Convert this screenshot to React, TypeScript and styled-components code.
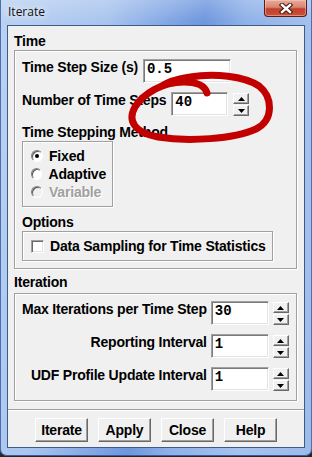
import React from "react";
import styled, { createGlobalStyle } from "styled-components";

const GlobalStyle = createGlobalStyle`
  html, body {
    margin: 0;
    padding: 0;
  }
  body {
    width: 312px;
    height: 457px;
    overflow: hidden;
    background: #24282c;
    font-family: "Liberation Sans", Arial, sans-serif;
  }
`;

const Window = styled.div`
  position: relative;
  box-sizing: border-box;
  width: 312px;
  height: 456px;
  padding: 0 7px 8px;
  display: flex;
  flex-direction: column;
  border-radius: 0 0 7px 7px;
  background: linear-gradient(
      180deg,
      rgba(255, 255, 255, 0.22) 0px,
      rgba(255, 255, 255, 0) 22px
    ),
    linear-gradient(
      100deg,
      #bad2f2 0%,
      #a9c4ee 28%,
      #7ea3e3 46%,
      #6d96dd 53%,
      #8eb0e8 63%,
      #a6c2ee 82%,
      #9cbaeb 100%
    );
  box-shadow: inset 1px 0 0 #4c70ad, inset -1px 0 0 #4c70ad,
    inset 0 -1px 0 #3b5d96;
`;

const TitleBar = styled.div`
  height: 25px;
  display: flex;
  align-items: flex-start;
`;

const Title = styled.div`
  padding: 4px 0 0 1px;
  font-family: "Open Sans", "Noto Sans", sans-serif;
  font-size: 12px;
  line-height: 16px;
  color: #111;
  text-shadow: 0 0 6px rgba(255, 255, 255, 0.95), 0 0 10px rgba(255, 255, 255, 0.7);
`;

const CloseButton = styled.div`
  box-sizing: border-box;
  margin-left: auto;
  margin-right: -2px;
  width: 43px;
  height: 17px;
  display: flex;
  align-items: center;
  justify-content: center;
  border: 1px solid #5b1d16;
  border-top: none;
  border-radius: 0 0 4px 4px;
  background: linear-gradient(
    180deg,
    #e9ab9b 0%,
    #d98572 45%,
    #c2412c 55%,
    #cb5038 100%
  );
  box-shadow: inset 0 0 0 1px rgba(255, 215, 205, 0.45);
`;

const Client = styled.div`
  flex: 1;
  display: flex;
  flex-direction: column;
  background: #f0f0f0;
  border: 1px solid #3d5a88;
  font-size: 14px;
  letter-spacing: -0.2px;
  font-weight: 700;
  color: #000;
`;

const Body = styled.div`
  padding: 7px 7px 8px 6px;
  display: flex;
  flex-direction: column;
`;

const SectionLabel = styled.div<{ $top?: number; $bottom?: number }>`
  line-height: 16px;
  margin-top: ${(p) => p.$top ?? 0}px;
  margin-bottom: ${(p) => p.$bottom ?? 1}px;
`;

const Frame = styled.div<{ $pad: string }>`
  border: 1px solid #a0a0a0;
  box-shadow: inset 1px 1px 0 #fff, 1px 1px 0 #fff;
  padding: ${(p) => p.$pad};
  display: flex;
  flex-direction: column;
  align-items: flex-start;
`;

const FieldRow = styled.div<{ $top?: number }>`
  display: flex;
  align-items: flex-start;
  gap: 5px;
  margin-top: ${(p) => p.$top ?? 0}px;
`;

const FieldLabel = styled.div`
  line-height: 16px;
  white-space: nowrap;
`;

const Entry = styled.div<{ $width: number }>`
  box-sizing: border-box;
  width: ${(p) => p.$width}px;
  height: 24px;
  padding: 1px 0 0 1px;
  background: #fff;
  border: 1px solid;
  border-color: #a0a0a0 #fff #fff #a0a0a0;
  box-shadow: inset 1px 1px 0 #7a7a7a, inset -1px -1px 0 #e3e3e3;
  font-family: "Liberation Mono", "DejaVu Sans Mono", monospace;
  font-size: 14px;
  line-height: 16px;
  letter-spacing: 0;
  padding-left: 3px;
`;

const Spinner = styled.div`
  display: flex;
  flex-direction: column;
  gap: 1px;
  padding-top: 1px;
`;

const SpinButton = styled.div`
  box-sizing: border-box;
  width: 16px;
  height: 11px;
  display: flex;
  align-items: center;
  justify-content: center;
  background: #f0f0f0;
  border: 1px solid;
  border-color: #fff #696969 #696969 #fff;
  box-shadow: inset -1px -1px 0 #a0a0a0;
`;

const GroupBox = styled.div<{ $width: number }>`
  box-sizing: border-box;
  width: ${(p) => p.$width}px;
  padding: 5px 6px 5px 8px;
  border: 1px solid #a0a0a0;
  box-shadow: inset 1px 1px 0 #fff, 1px 1px 0 #fff;
  display: flex;
  flex-direction: column;
`;

const ChoiceRow = styled.div<{ $disabled?: boolean }>`
  height: 18px;
  display: flex;
  align-items: center;
  gap: 6px;
  line-height: 18px;
  color: ${(p) => (p.$disabled ? "#a0a0a0" : "#000")};
  text-shadow: ${(p) => (p.$disabled ? "1px 1px 0 #fff" : "none")};
`;

const RadioMark = styled.div<{ $checked?: boolean; $disabled?: boolean }>`
  box-sizing: border-box;
  width: 12px;
  height: 12px;
  border-radius: 50%;
  border: 1px solid;
  border-color: #808080 #fff #fff #808080;
  box-shadow: inset 1px 1px 0 #5a5a5a;
  background: ${(p) => (p.$disabled ? "#f0f0f0" : "#fff")};
  display: flex;
  align-items: center;
  justify-content: center;
  &::after {
    content: "";
    display: ${(p) => (p.$checked ? "block" : "none")};
    width: 4px;
    height: 4px;
    border-radius: 50%;
    background: #000;
  }
`;

const CheckMark = styled.div`
  box-sizing: border-box;
  width: 13px;
  height: 13px;
  background: #fff;
  border: 1px solid;
  border-color: #a0a0a0 #fff #fff #a0a0a0;
  box-shadow: inset 1px 1px 0 #6a6a6a, inset -1px -1px 0 #e3e3e3;
`;

const IterGrid = styled.div`
  display: grid;
  grid-template-columns: max-content 58px 16px;
  column-gap: 4px;
  row-gap: 9px;
  align-items: start;
`;

const GridLabel = styled.div`
  justify-self: end;
  line-height: 16px;
  white-space: nowrap;
`;

const Separator = styled.div`
  border-top: 1px solid #a0a0a0;
  border-bottom: 1px solid #fff;
`;

const ButtonRow = styled.div`
  flex: 1;
  display: flex;
  justify-content: center;
  align-items: flex-start;
  gap: 10px;
  padding-top: 7px;
`;

const PushButton = styled.div`
  box-sizing: border-box;
  width: 53px;
  height: 24px;
  text-align: center;
  line-height: 22px;
  background: #f0f0f0;
  border: 1px solid;
  border-color: #fff #696969 #696969 #fff;
  box-shadow: inset -1px -1px 0 #a0a0a0;
`;

const Scribble = styled.svg`
  position: absolute;
  left: 118px;
  top: 66px;
  width: 164px;
  height: 82px;
  pointer-events: none;
`;

const Arrow = ({ down }: { down?: boolean }) => (
  <svg width="7" height="4" viewBox="0 0 7 4">
    <polygon points={down ? "0,0 7,0 3.5,4" : "3.5,0 7,4 0,4"} fill="#000" />
  </svg>
);

const SpinBox = () => (
  <Spinner>
    <SpinButton>
      <Arrow />
    </SpinButton>
    <SpinButton>
      <Arrow down />
    </SpinButton>
  </Spinner>
);

const iterationRows = [
  { label: "Max Iterations per Time Step", value: "30" },
  { label: "Reporting Interval", value: "1" },
  { label: "UDF Profile Update Interval", value: "1" },
];

const App = () => {
  return (
    <>
      <GlobalStyle />
      <Window>
        <TitleBar>
          <Title>Iterate</Title>
          <CloseButton>
            <svg width="14" height="11" viewBox="0 0 14 11">
              <path d="M3,2 L11,9 M11,2 L3,9" stroke="#3b1510" strokeWidth="4.4" strokeLinecap="square" />
              <path d="M3,2 L11,9 M11,2 L3,9" stroke="#fff" strokeWidth="2.4" strokeLinecap="square" />
            </svg>
          </CloseButton>
        </TitleBar>
        <Client>
          <Body>
            <SectionLabel>Time</SectionLabel>
            <Frame $pad="8px 7px 7px 7px">
              <FieldRow>
                <FieldLabel>Time Step Size (s)</FieldLabel>
                <Entry $width={88}>0.5</Entry>
              </FieldRow>
              <FieldRow $top={9}>
                <FieldLabel>Number of Time Steps</FieldLabel>
                <Entry $width={57}>40</Entry>
                <SpinBox />
              </FieldRow>
              <SectionLabel $top={8}>Time Stepping Method</SectionLabel>
              <GroupBox $width={91}>
                <ChoiceRow>
                  <RadioMark $checked />
                  Fixed
                </ChoiceRow>
                <ChoiceRow>
                  <RadioMark />
                  Adaptive
                </ChoiceRow>
                <ChoiceRow $disabled>
                  <RadioMark $disabled />
                  Variable
                </ChoiceRow>
              </GroupBox>
              <SectionLabel $top={7}>Options</SectionLabel>
              <GroupBox $width={251}>
                <ChoiceRow>
                  <CheckMark />
                  Data Sampling for Time Statistics
                </ChoiceRow>
              </GroupBox>
            </Frame>
            <SectionLabel $top={5} $bottom={3}>
              Iteration
            </SectionLabel>
            <Frame $pad="7px 7px 9px 7px">
              <IterGrid>
                {iterationRows.map((row) => (
                  <React.Fragment key={row.label}>
                    <GridLabel>{row.label}</GridLabel>
                    <Entry $width={58}>{row.value}</Entry>
                    <SpinBox />
                  </React.Fragment>
                ))}
              </IterGrid>
            </Frame>
          </Body>
          <Separator />
          <ButtonRow>
            <PushButton>Iterate</PushButton>
            <PushButton>Apply</PushButton>
            <PushButton>Close</PushButton>
            <PushButton>Help</PushButton>
          </ButtonRow>
        </Client>
        <Scribble viewBox="118 66 164 82">
          <path
            d="M207,93 C205,86 198,82 184,82 C162,82 143,94 135,107 C127,121 135,133 158,137 C188,142 234,139 256,129 C274,120 273,97 259,86 C244,76 214,73 190,77 C176,79 166,83 160,87"
            fill="none"
            stroke="#c20000"
            strokeWidth="7"
            strokeLinecap="round"
            strokeLinejoin="round"
          />
        </Scribble>
      </Window>
    </>
  );
};

export default App;
